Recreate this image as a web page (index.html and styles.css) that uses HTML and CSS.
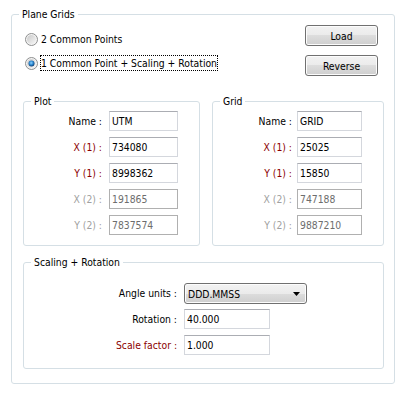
FILE: index.html
```html
<!DOCTYPE html>
<html>
<head>
<meta charset="utf-8">
<title>Plane Grids</title>
<link rel="stylesheet" href="styles.css">
</head>
<body>
<fieldset class="group outer">
  <legend>Plane Grids</legend>
  <div class="top-row">
    <div class="radios">
      <div class="radio">
        <svg class="radio-icon" width="13" height="13" viewBox="0 0 13 13">
          <defs>
            <linearGradient id="rb1" x1="0" y1="0" x2="1" y2="1">
              <stop offset="0" stop-color="#c9c9c9"/>
              <stop offset="1" stop-color="#f7f7f7"/>
            </linearGradient>
          </defs>
          <circle cx="6.5" cy="6.5" r="6" fill="#f4f4f4" stroke="#8e8f8f"/>
          <circle cx="6.5" cy="6.5" r="4.5" fill="url(#rb1)"/>
        </svg>
        <span class="radio-text">2 Common Points</span>
      </div>
      <div class="radio">
        <svg class="radio-icon" width="13" height="13" viewBox="0 0 13 13">
          <defs>
            <linearGradient id="rb2" x1="0" y1="0" x2="1" y2="1">
              <stop offset="0" stop-color="#c9c9c9"/>
              <stop offset="1" stop-color="#f7f7f7"/>
            </linearGradient>
            <radialGradient id="dot" cx="0.45" cy="0.4" r="0.6">
              <stop offset="0" stop-color="#8fd3ff"/>
              <stop offset="0.55" stop-color="#2a86cf"/>
              <stop offset="1" stop-color="#0b3a6e"/>
            </radialGradient>
          </defs>
          <circle cx="6.5" cy="6.5" r="6" fill="#f4f4f4" stroke="#8e8f8f"/>
          <circle cx="6.5" cy="6.5" r="4.5" fill="url(#rb2)"/>
          <circle cx="6.5" cy="6.5" r="3" fill="url(#dot)"/>
        </svg>
        <span class="radio-text focus">1 Common Point + Scaling + Rotation</span>
      </div>
    </div>
    <div class="buttons">
      <div class="btn">Load</div>
      <div class="btn">Reverse</div>
    </div>
  </div>

  <div class="pair">
    <fieldset class="group coords plot">
      <legend>Plot</legend>
      <div class="form">
        <span class="lbl">Name :</span><span class="field">UTM</span>
        <span class="lbl req">X (1) :</span><span class="field">734080</span>
        <span class="lbl req">Y (1) :</span><span class="field">8998362</span>
        <span class="lbl off">X (2) :</span><span class="field disabled">191865</span>
        <span class="lbl off">Y (2) :</span><span class="field disabled">7837574</span>
      </div>
    </fieldset>
    <fieldset class="group coords grid">
      <legend>Grid</legend>
      <div class="form">
        <span class="lbl">Name :</span><span class="field">GRID</span>
        <span class="lbl req">X (1) :</span><span class="field">25025</span>
        <span class="lbl req">Y (1) :</span><span class="field">15850</span>
        <span class="lbl off">X (2) :</span><span class="field disabled">747188</span>
        <span class="lbl off">Y (2) :</span><span class="field disabled">9887210</span>
      </div>
    </fieldset>
  </div>

  <fieldset class="group scaling">
    <legend>Scaling + Rotation</legend>
    <div class="sform">
      <span class="lbl">Angle units :</span>
      <div class="combo"><span>DDD.MMSS</span><svg class="arrow" width="7" height="4" viewBox="0 0 7 4"><path d="M0 0H7L3.5 4Z" fill="#000"/></svg></div>
      <span class="lbl">Rotation :</span><span class="field rot">40.000</span>
      <span class="lbl req">Scale factor :</span><span class="field rot">1.000</span>
    </div>
  </fieldset>
</fieldset>
</body>
</html>
```

FILE: styles.css
```css
* { box-sizing: border-box; }
html, body { margin: 0; padding: 0; background: #fff; }
body {
  font-family: "DejaVu Sans Condensed", "Liberation Sans", sans-serif;
  font-size: 10.3px;
  color: #000;
}

.group {
  border: 1px solid #d5dfe5;
  border-radius: 3px;
  margin: 0;
  min-width: 0;
}
.group > legend {
  padding: 0 3px;
  margin-left: -4px;
  height: 13px;
  line-height: 13px;
}

.outer {
  margin: 8px 0 0 11px;
  width: 384px;
  padding: 4px 10px 14px 11px;
}

.top-row {
  display: flex;
  justify-content: space-between;
  align-items: flex-start;
}
.radios {
  margin-top: 2px;
  display: flex;
  flex-direction: column;
}
.radio {
  height: 24px;
  display: flex;
  align-items: center;
}
.radio-icon { margin-left: 2px; flex: none; }
.radio-text {
  margin-left: 3px;
  line-height: 14px;
  white-space: nowrap;
}
.radio-text.focus {
  margin-left: 2px;
  border: 1px dotted #000;
}

.buttons {
  display: flex;
  flex-direction: column;
  gap: 9px;
  margin-right: 6px;
}
.btn {
  width: 73px;
  height: 21px;
  border: 1px solid #707070;
  border-radius: 3px;
  box-shadow: inset 0 0 0 1px #fcfcfc;
  background: linear-gradient(#f2f2f2 0%, #ebebeb 50%, #dddddd 50%, #cfcfcf 100%);
  display: flex;
  align-items: center;
  justify-content: center;
}

.pair {
  margin-top: 19px;
  display: grid;
  grid-template-columns: 177px 172px;
  column-gap: 12px;
}
.coords {
  padding: 3px 21px 10px 11px;
}
.form {
  display: grid;
  row-gap: 6px;
  align-items: center;
}
.plot .form { grid-template-columns: 1fr 69px; column-gap: 7px; }
.grid .form { grid-template-columns: 1fr 65px; column-gap: 5px; }

.lbl {
  text-align: right;
  white-space: nowrap;
}
.lbl.req { color: #8b0000; }
.lbl.off { color: #a0a0a0; }

.field {
  height: 20px;
  border: 1px solid #d4d7dd;
  border-top-color: #abadb3;
  background: #fff;
  padding: 0 2px;
  line-height: 19px;
  white-space: nowrap;
  overflow: hidden;
}
.field.disabled {
  border-color: #b0b0b0;
  color: #6d6d6d;
}

.scaling {
  margin-top: 10px;
  padding: 14px 10px 13px 11px;
}
.sform {
  display: grid;
  grid-template-columns: 142px auto;
  column-gap: 7px;
  row-gap: 6px;
  align-items: center;
  justify-content: start;
}
.combo {
  width: 123px;
  height: 21px;
  margin-bottom: -1px;
  border: 1px solid #707070;
  border-radius: 3px;
  box-shadow: inset 0 0 0 1px #fcfcfc;
  background: linear-gradient(#f2f2f2 0%, #ebebeb 50%, #dddddd 50%, #cfcfcf 100%);
  display: flex;
  align-items: center;
  justify-content: space-between;
  padding: 0 6px 0 3px;
}
.field.rot { width: 86px; }
```
